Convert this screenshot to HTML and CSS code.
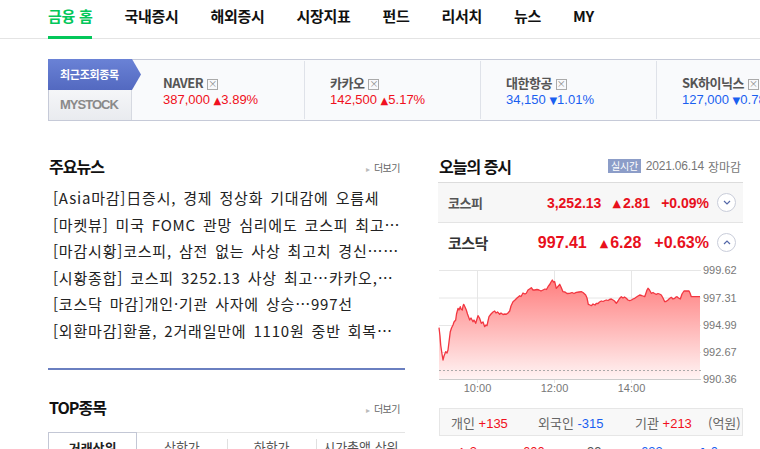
FILE: index.html
```html
<!DOCTYPE html>
<html lang="ko">
<head>
    <meta charset="UTF-8">
    <meta name="viewport" content="width=device-width, initial-scale=1.0">
    <title>금융 홈</title>
    <link rel="stylesheet" href="styles.css">
</head>
<body>
    <nav class="gnb">
        <a class="gnb-item active" href="#">금융 홈</a>
        <a class="gnb-item" href="#">국내증시</a>
        <a class="gnb-item" href="#">해외증시</a>
        <a class="gnb-item" href="#">시장지표</a>
        <a class="gnb-item" href="#">펀드</a>
        <a class="gnb-item" href="#">리서치</a>
        <a class="gnb-item" href="#">뉴스</a>
        <a class="gnb-item" href="#">MY</a>
    </nav>

    <div class="ticker">
        <div class="ticker-tabs">
            <div class="tab-recent">최근조회종목</div>
            <div class="tab-my">MYSTOCK</div>
        </div>
        <ul class="ticker-list">
            <li class="ticker-item">
                <div class="t-name">NAVER<span class="t-del">×</span></div>
                <div class="t-price up">387,000 <span class="arr">▲</span>3.89%</div>
            </li>
            <li class="ticker-item">
                <div class="t-name">카카오<span class="t-del">×</span></div>
                <div class="t-price up">142,500 <span class="arr">▲</span>5.17%</div>
            </li>
            <li class="ticker-item">
                <div class="t-name">대한항공<span class="t-del">×</span></div>
                <div class="t-price down">34,150 <span class="arr">▼</span>1.01%</div>
            </li>
            <li class="ticker-item">
                <div class="t-name">SK하이닉스<span class="t-del">×</span></div>
                <div class="t-price down">127,000 <span class="arr">▼</span>0.78%</div>
            </li>
        </ul>
    </div>

    <div class="main">
        <div class="col-left">
            <div class="sec-head">
                <h2 class="sec-title">주요뉴스</h2>
                <a class="more" href="#">더보기</a>
            </div>
            <ul class="news-list">
                <li>[Asia마감]日증시, 경제 정상화 기대감에 오름세</li>
                <li>[마켓뷰] 미국 FOMC 관망 심리에도 코스피 최고…</li>
                <li>[마감시황]코스피, 삼전 없는 사상 최고치 경신……</li>
                <li>[시황종합] 코스피 3252.13 사상 최고…카카오,…</li>
                <li>[코스닥 마감]개인·기관 사자에 상승…997선</li>
                <li>[외환마감]환율, 2거래일만에 1110원 중반 회복…</li>
            </ul>

            <div class="sec-head top-head">
                <h2 class="sec-title">TOP종목</h2>
                <a class="more" href="#">더보기</a>
            </div>
            <div class="top-tabs">
                <div class="tab on"><div class="tab-in">거래상위</div></div>
                <div class="tab"><div class="tab-in">상한가</div></div>
                <div class="tab"><div class="tab-in">하한가</div></div>
                <div class="tab"><div class="tab-in">시가총액 상위</div></div>
            </div>
        </div>

        <div class="col-right">
            <div class="sec-head">
                <h2 class="sec-title">오늘의 증시</h2>
                <div class="today-meta">
                    <span class="badge">실시간</span>
                    <span class="date">2021.06.14</span>
                    <span class="close">장마감</span>
                </div>
            </div>

            <div class="market">
                <div class="mk-row kospi">
                    <span class="mk-label">코스피</span>
                    <span class="mk-val">3,252.13</span>
                    <span class="mk-val"><span class="arr">▲</span>2.81</span>
                    <span class="mk-val">+0.09%</span>
                    <span class="mk-btn">
                        <svg width="8" height="5" viewBox="0 0 8 5"><path d="M1 1l3 3 3-3" fill="none" stroke="#5468a8" stroke-width="1.2"/></svg>
                    </span>
                </div>
                <div class="mk-row kosdaq">
                    <span class="mk-label">코스닥</span>
                    <span class="mk-val">997.41</span>
                    <span class="mk-val"><span class="arr">▲</span>6.28</span>
                    <span class="mk-val">+0.63%</span>
                    <span class="mk-btn">
                        <svg width="8" height="5" viewBox="0 0 8 5"><path d="M1 4l3-3 3 3" fill="none" stroke="#5468a8" stroke-width="1.2"/></svg>
                    </span>
                </div>
            </div>

            <svg class="chart" width="305" height="146" viewBox="0 0 305 146">
                <defs>
                    <linearGradient id="fillGrad" x1="0" y1="10" x2="0" y2="109" gradientUnits="userSpaceOnUse">
                        <stop offset="0" stop-color="#ff7f7f"/>
                        <stop offset="1" stop-color="#fff4f4"/>
                    </linearGradient>
                </defs>
                <g transform="translate(1,8)">
                    <g stroke="#e6e6e6" stroke-width="1">
                        <line x1="0" y1="0.5" x2="262" y2="0.5"/>
                        <line x1="0" y1="28" x2="262" y2="28"/>
                        <line x1="0" y1="55.5" x2="262" y2="55.5"/>
                        <line x1="0" y1="82.5" x2="262" y2="82.5"/>
                        <line x1="38.5" y1="0" x2="38.5" y2="113"/>
                        <line x1="115.5" y1="0" x2="115.5" y2="113"/>
                        <line x1="192.5" y1="0" x2="192.5" y2="113"/>
                    </g>
                    <path id="area" fill="url(#fillGrad)" d=""/>
                    <polyline id="line" fill="none" stroke="#f23640" stroke-width="1.3" stroke-linejoin="round" points=""/>
                    <line x1="0" y1="100.5" x2="262" y2="100.5" stroke="#aaa" stroke-dasharray="2 2"/>
                    <line x1="0" y1="109.5" x2="262" y2="109.5" stroke="#ccc"/>
                    <g class="ylab">
                        <text x="264" y="4">999.62</text>
                        <text x="264" y="31.5">997.31</text>
                        <text x="264" y="59">994.99</text>
                        <text x="264" y="86">992.67</text>
                        <text x="264" y="113">990.36</text>
                    </g>
                    <g class="xlab">
                        <text x="38.5" y="122">10:00</text>
                        <text x="115.5" y="122">12:00</text>
                        <text x="192.5" y="122">14:00</text>
                    </g>
                </g>
            </svg>

            <div class="investor">
                <span class="inv inv-1">개인 <b class="up">+135</b></span>
                <span class="inv inv-2">외국인 <b class="down">-315</b></span>
                <span class="inv inv-3">기관 <b class="up">+213</b></span>
                <span class="inv">(억원)</span>
            </div>
            <div class="breadth">
                <span class="br br-1 up"><i>⬆</i> 3</span>
                <span class="br br-2 up"><i>▲</i> 600</span>
                <span class="br br-3">99</span>
                <span class="br br-4 down"><i>▼</i> 633</span>
                <span class="br down"><i>⬇</i> 0</span>
            </div>
        </div>
    </div>

    <script>
        // KOSDAQ intraday points (chart-local units)
        const pts = [
            [0,57.7],[1,66],[1.7,75],[3,84],[4,90],[5,86],[6.7,81.7],[8,83],[9,80],[10,72],[11.3,61.7],[12.5,58],
            [14,55],[15,52],[16.7,50],[17.5,44],[19,38.3],[20,40],[21.3,36.7],[22,39],[23.3,40],[24,36],[24.7,34.3],
            [26,37],[27.3,40],[28.5,44],[30.7,50],[32,48],[34,51.7],[35,50],[36.7,53.3],[38,49],[39,45.7],[40.5,48],
            [42.3,53.3],[44,52],[45.7,56.7],[47,55],[48,55.7],[49,51],[50,46.7],[52,44],[54,42],[55.7,41],[57,43],
            [58.5,42],[60.7,44.3],[62,43],[64,44.5],[66,44],[67.3,44.3],[69,43],[70.7,41],[72,36],[74,31.7],[76,30],
            [78,28],[80.7,25.7],[82,26.5],[84,23],[86,24],[87.3,23.3],[89,20],[90.5,19],[92.3,17.7],[94,20],[95.7,20],
            [98,19.5],[100,20],[102,21],[104,20],[106,19],[107.5,19.5],[109,16.7],[111,14],[112,12],[113.3,10],
            [114.5,12],[115.7,11.7],[117.3,18.3],[118.5,17],[120.7,14.3],[122,17],[124,21.7],[126,22],[128,23.5],
            [130.7,23.3],[133,22.5],[135,23.5],[137.3,22.3],[140,22],[142.3,21.7],[144,22.5],[146.7,25],[148,28],
            [149.3,34.3],[151,35],[152.3,35.7],[154,34],[156,35],[157.3,33.3],[159,33.5],[160.5,32],[162.3,31],
            [164,31.5],[166,30.5],[167.3,30],[169,30.5],[170.5,29.5],[172.3,29],[174,30],[175.5,31],[177.3,33.3],
            [179,31],[180.5,28.5],[182.3,26.7],[184,28],[185.5,27],[187.3,28.3],[189,30],[190.7,30.7],[192.5,30],
            [194,29],[195.7,28.3],[197.5,27],[199,26],[200.7,25],[202.5,25.5],[204,26],[205.7,26.7],[207,23],[208,20],
            [209,18.3],[210.5,20],[212.3,23.3],[214,22.5],[215.5,23.5],[217.3,24.3],[219,23.5],[220.5,24],[222.3,25],
            [224,28],[225.7,31.7],[227,31.5],[229,30],[230.5,28.5],[232.3,27.3],[234,29],[235.7,28.3],[237,27],
            [238,26.7],[239.5,28],[241.3,29],[243,24],[245,21],[247,21],[250,21],[251,23],[252.3,26.7],[261,26.7]
        ];
        const line = pts.map(p => p.join(',')).join(' ');
        document.getElementById('line').setAttribute('points', line);
        document.getElementById('area').setAttribute('d', 'M' + line.replace(/ /g, ' L') + ' L261,109 L0,109 Z');
    </script>
</body>
</html>
```

FILE: styles.css
```css
body {
    margin: 0;
    font-family: "Noto Sans CJK KR", "Noto Sans", sans-serif;
    color: #222;
    background-color: #fff;
    overflow: hidden;
}
a {
    text-decoration: none;
    color: inherit;
}
.up {
    color: #f01020;
}
.down {
    color: #1a5ff0;
}

/* top navigation */
.gnb {
    display: flex;
    gap: 32px;
    height: 39px;
    box-sizing: border-box;
    padding-left: 48px;
    border-bottom: 1px solid #e4e4e4;
}
.gnb-item {
    height: 39px;
    box-sizing: border-box;
    font-size: 15px;
    font-weight: bold;
    line-height: 31px;
    letter-spacing: -0.3px;
    color: #111;
}
.gnb-item.active {
    color: #03c75a;
    border-bottom: 3px solid #03c75a;
}

/* recently viewed stocks */
.ticker {
    display: flex;
    width: 800px;
    height: 62px;
    box-sizing: border-box;
    margin: 20px 0 0 48px;
    border: 1px solid #c6cad8;
    background-color: #f9fafc;
}
.ticker-tabs {
    flex: none;
    width: 83px;
    display: flex;
    flex-direction: column;
}
.tab-recent {
    width: 93px;
    height: 31px;
    margin: -1px 0 0 -1px;
    padding-left: 12px;
    box-sizing: border-box;
    background: linear-gradient(#6a82d6, #5369c0);
    clip-path: polygon(0 0, 84px 0, 93px 50%, 84px 100%, 0 100%);
    color: #fff;
    font-size: 11px;
    font-weight: bold;
    line-height: 31px;
    letter-spacing: -0.3px;
}
.tab-my {
    flex: 1;
    padding-left: 11px;
    background: linear-gradient(#f5f6f8, #e9ebef);
    border-right: 1px solid #d6d9e1;
    font-family: "Liberation Sans", sans-serif;
    font-size: 13px;
    font-weight: bold;
    line-height: 30px;
    letter-spacing: -1px;
    color: #8a8a8a;
}
.ticker-list {
    display: flex;
    list-style: none;
    margin: 0;
    padding: 0;
}
.ticker-item {
    flex: none;
    width: 176px;
    box-sizing: border-box;
    margin: 1px 0;
    padding: 13px 0 0 25px;
    border-left: 1px solid #dfe2e9;
}
.ticker-item:first-child {
    width: 172px;
    padding-left: 31px;
    border-left: 0;
}
.t-name {
    font-size: 13px;
    font-weight: bold;
    line-height: 17px;
    letter-spacing: -0.5px;
    color: #555;
}
.t-del {
    display: inline-block;
    width: 9px;
    height: 9px;
    margin-left: 4px;
    border: 1px solid #aaa;
    font-size: 9px;
    font-weight: normal;
    line-height: 8px;
    text-align: center;
    color: #888;
    vertical-align: 1px;
    letter-spacing: 0;
}
.t-price {
    font-family: "Liberation Sans", sans-serif;
    font-size: 13px;
    line-height: 17px;
}
.t-price .arr {
    font-family: "DejaVu Sans", sans-serif;
    font-size: 10px;
}

/* main columns */
.main {
    display: flex;
    gap: 33px;
    margin-top: 35px;
    padding-left: 48px;
}
.col-left {
    flex: none;
    width: 357px;
}
.col-right {
    flex: none;
    width: 305px;
}
.sec-head {
    display: flex;
    justify-content: space-between;
    align-items: center;
    height: 20px;
}
.sec-title {
    margin: 0;
    font-size: 16px;
    font-weight: bold;
    line-height: 20px;
    letter-spacing: -1px;
    color: #111;
}
.more {
    padding-right: 5px;
    font-size: 10px;
    color: #666;
    letter-spacing: -0.5px;
    margin-top: 3px;
}
.more::before {
    content: "▸";
    margin-right: 4px;
    font-size: 8px;
    color: #bbb;
}
.news-list {
    list-style: none;
    margin: 9px 0 0;
    padding: 0 0 24px 5px;
    border-bottom: 2px solid #6a7fc0;
}
.news-list li {
    font-size: 15px;
    line-height: 26.5px;
    letter-spacing: 0.8px;
    word-spacing: 2px;
    white-space: nowrap;
    overflow: hidden;
    color: #222;
}
.top-head {
    margin-top: 27px;
}
.top-tabs {
    display: grid;
    grid-template-columns: repeat(4, 1fr);
    margin-top: 15px;
    border-top: 1px solid #e4e4e4;
}
.tab {
    height: 30px;
    padding-top: 6px;
    box-sizing: border-box;
    text-align: center;
    font-size: 13px;
    color: #555;
}
.tab-in {
    line-height: 16px;
    height: 30px;
}
.tab:nth-child(n+3) .tab-in {
    border-left: 1px solid #e0e0e0;
}
.tab.on {
    margin-top: -1px;
    height: 31px;
    padding-top: 7px;
    border: 1px solid #c3c7d5;
    border-bottom: 0;
    font-weight: bold;
    color: #222;
}

/* today's market */
.sec-head .sec-title {
    padding-left: 1px;
}
.today-meta {
    display: flex;
    align-items: center;
    gap: 4px;
    padding-right: 2px;
    font-size: 12px;
    color: #777;
}
.badge {
    padding: 0 3px;
    background-color: #8c9dc8;
    color: #fff;
    font-size: 10px;
    line-height: 14px;
    letter-spacing: -0.3px;
}
.date {
    font-family: "Liberation Sans", sans-serif;
    letter-spacing: -0.2px;
    margin-left: 1px;
}
.market {
    margin-top: 6px;
}
.mk-row {
    display: flex;
    align-items: center;
    height: 40px;
    box-sizing: border-box;
    padding: 0 7px 0 10px;
    border-top: 1px solid #dcdcdc;
}
.kospi {
    background-color: #f7f7f7;
}
.kosdaq {
    border-top-color: #e4e4e4;
}
.mk-label {
    flex: 1;
    font-weight: bold;
    letter-spacing: -0.5px;
}
.kospi .mk-label {
    font-size: 13px;
    color: #555;
}
.kosdaq .mk-label {
    font-size: 15px;
    color: #333;
}
.mk-val {
    font-family: "Liberation Sans", sans-serif;
    font-weight: bold;
    color: #e8101c;
}
.kospi .mk-val {
    font-size: 14px;
    margin-left: 11px;
}
.kosdaq .mk-val {
    font-size: 16px;
    margin-left: 13px;
}
.mk-val .arr {
    font-family: "DejaVu Sans", sans-serif;
    font-size: 11px;
    margin-right: 2px;
    vertical-align: 1px;
}
.mk-btn {
    display: flex;
    align-items: center;
    justify-content: center;
    width: 19px;
    height: 19px;
    box-sizing: border-box;
    margin-left: 8px;
    border: 1px solid #c9cdda;
    border-radius: 50%;
    background-color: #fff;
}
.chart {
    display: block;
}
.chart text {
    font-family: "Liberation Sans", sans-serif;
    font-size: 11px;
    fill: #777;
}
.xlab text {
    text-anchor: middle;
}
.investor {
    display: flex;
    align-items: center;
    height: 28px;
    box-sizing: border-box;
    margin-left: 1px;
    padding-left: 11px;
    border: 1px solid #e6e6e6;
    background-color: #f8f8f8;
    font-size: 13px;
    color: #666;
}
.inv b {
    font-family: "Liberation Sans", sans-serif;
    font-weight: normal;
}
.inv-1 {
    width: 87px;
}
.inv-2 {
    width: 97px;
}
.inv-3 {
    width: 73px;
}
.breadth {
    display: flex;
    padding-left: 19px;
    font-family: "Liberation Sans", sans-serif;
    font-size: 13px;
    line-height: 32px;
    color: #555;
}
.br i {
    font-style: normal;
    font-family: "DejaVu Sans", sans-serif;
    font-size: 11px;
}
.br-1 {
    width: 54px;
}
.br-2 {
    width: 76px;
}
.br-3 {
    width: 42px;
}
.br-4 {
    width: 69px;
}
```
